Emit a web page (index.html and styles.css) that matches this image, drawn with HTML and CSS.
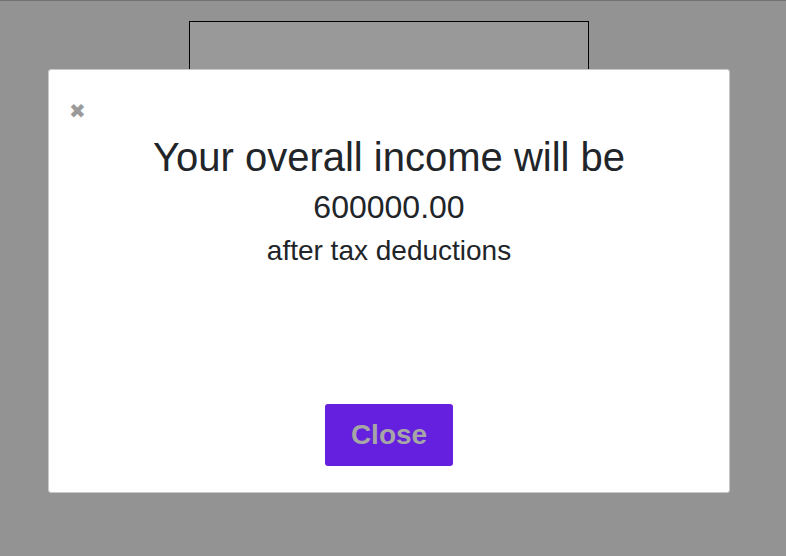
FILE: index.html
```html
<!DOCTYPE html>
<html>
<head>
<meta charset="utf-8">
<link rel="stylesheet" href="styles.css">
</head>
<body>
<div class="page">
  <div class="card"></div>
</div>
<div class="overlay"></div>
<div class="modal">
  <div class="modal-top">
    <span class="close-x">&#x2716;</span>
  </div>
  <div class="modal-body">
    <h2 class="title">Your overall income will be</h2>
    <div class="amount">600000.00</div>
    <div class="note">after tax deductions</div>
  </div>
  <div class="modal-footer">
    <button class="btn-close">Close</button>
  </div>
</div>
</body>
</html>
```
FILE: styles.css
```css
html, body {
  margin: 0;
  padding: 0;
  height: 100%;
}
body {
  background: #f5f5f5;
  font-family: "Liberation Sans", Arial, sans-serif;
  border-top: 1px solid #717171;
  box-sizing: border-box;
}
.page {
  display: flex;
  justify-content: center;
  padding-top: 20px;
}
.card {
  width: 398px;
  height: 300px;
  border: 1px solid #000;
  background: #fff;
  margin-left: -9px;
}
.overlay {
  position: fixed;
  inset: 0;
  top: 1px;
  background: rgba(0, 0, 0, 0.4);
}
.modal {
  position: fixed;
  left: 48px;
  top: 69px;
  width: 682px;
  height: 424px;
  box-sizing: border-box;
  background: #fff;
  border: 1px solid #c8c8c8;
  border-radius: 3px;
  display: flex;
  flex-direction: column;
  color: #212529;
}
.modal-top {
  padding: 29px 0 0 20px;
  height: 24px;
}
.close-x {
  color: #9a9a9a;
  font-family: "DejaVu Sans", sans-serif;
  font-size: 20px;
}
.modal-body {
  text-align: center;
}
.title {
  margin: 11px 0 0;
  font-size: 40px;
  font-weight: normal;
  line-height: 46px;
}
.amount {
  font-size: 32px;
  line-height: 38px;
  margin-top: 8px;
}
.note {
  font-size: 28px;
  line-height: 32px;
  margin-top: 9px;
}
.modal-footer {
  margin-top: auto;
  padding-bottom: 26px;
  display: flex;
  justify-content: center;
}
.btn-close {
  width: 128px;
  height: 62px;
  border: none;
  border-radius: 3px;
  background: #651fdf;
  color: #a6a6a6;
  font-family: "Liberation Sans", Arial, sans-serif;
  font-weight: bold;
  font-size: 28px;
  padding: 0;
}
```
